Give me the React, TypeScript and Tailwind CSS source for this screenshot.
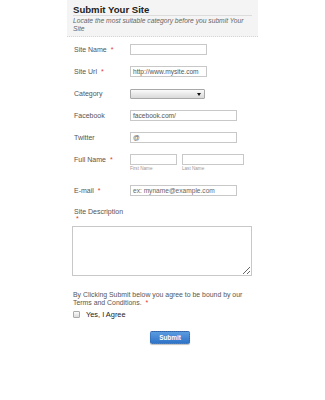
import React from "react";

const Star = () => <span className="text-[#e53935] ml-[4px]">*</span>;

function Row({ label, req, children, extra = "" }: { label: string; req?: boolean; children: React.ReactNode; extra?: string }) {
  return (
    <div className={`flex items-start h-[22px] ${extra}`}>
      <div className="w-[56px] h-[11px] leading-[11px] text-[7px] text-[#555] whitespace-nowrap">
        {label}
        {req && <Star />}
      </div>
      {children}
    </div>
  );
}

const inputCls =
  "h-[11px] border border-[#c8c8c8] bg-white text-[6.6px] leading-[9px] text-[#555] pl-[2px] box-border";

export default function App() {
  return (
    <div className="w-[325px] h-[400px] bg-white font-['Liberation_Sans',Arial,sans-serif]">
      <div className="w-[191px] mx-auto">
        {/* Header */}
        <div className="bg-[#f4f4f4] h-[37px] px-[6px] pt-[4px] border-b border-dotted border-[#d6d6d6]">
          <div className="text-[9.6px] font-bold text-[#222] leading-[11px] border-b border-[#dcdcdc]">
            Submit Your Site
          </div>
          <div className="text-[6.7px] italic text-[#666] leading-[7.5px] mt-[1px]">
            Locate the most suitable category before you submit Your Site
          </div>
        </div>

        {/* Body */}
        <div className="pl-[7px] pt-[7px]">
          <Row label="Site Name" req>
            <div className={`${inputCls} w-[77px]`}></div>
          </Row>
          <Row label="Site Url" req>
            <div className={`${inputCls} w-[77px]`}>http://www.mysite.com</div>
          </Row>
          <Row label="Category">
            <div className="w-[75px] h-[10px] mt-[1px] border border-[#a8a8a8] rounded-[1px] bg-gradient-to-b from-[#fafafa] to-[#d9d9d9] flex items-center justify-end pr-[3px] box-border">
              <svg width="4" height="3" viewBox="0 0 4 3">
                <path d="M0 0H4L2 3Z" fill="#111" />
              </svg>
            </div>
          </Row>
          <Row label="Facebook">
            <div className={`${inputCls} w-[107px]`}>facebook.com/</div>
          </Row>
          <Row label="Twitter">
            <div className={`${inputCls} w-[107px]`}>@</div>
          </Row>
          <Row label="Full Name" req extra="h-[31px]">
            <div className="flex gap-[5px]">
              <div>
                <div className={`${inputCls} w-[47px]`}></div>
                <div className="text-[4.6px] text-[#999] leading-[6px] mt-[1px]">First Name</div>
              </div>
              <div>
                <div className={`${inputCls} w-[62px]`}></div>
                <div className="text-[4.6px] text-[#999] leading-[6px] mt-[1px]">Last Name</div>
              </div>
            </div>
          </Row>
          <Row label="E-mail" req>
            <div className={`${inputCls} w-[107px] text-[#666]`}>ex: myname@example.com</div>
          </Row>

          {/* Site Description */}
          <div className="mt-[1px] text-[7px] text-[#555] leading-[8px]">
            Site Description
            <div className="text-[#e53935] pl-[2px] leading-[6px]">*</div>
          </div>
          <textarea
            className="block mt-[4px] -ml-[2px] w-[180px] h-[50px] border border-[#c8c8c8] bg-white resize outline-none"
            readOnly
          />

          {/* Terms */}
          <div className="mt-[15px] -ml-[1px] text-[6.9px] text-[#555] leading-[8px]">
            By Clicking Submit below you agree to be bound by our
            <br />
            Terms and Conditions.
            <span className="text-[#e53935] ml-[4px]">*</span>
          </div>
          <div className="flex items-center mt-[3px] -ml-[1px]">
            <div className="w-[7px] h-[7px] border border-[#aaa] rounded-[1px] bg-gradient-to-b from-[#fafafa] to-[#dcdcdc]" />
            <span className="ml-[6px] text-[7.4px] text-[#222] leading-[9px]">Yes, I Agree</span>
          </div>

          {/* Submit */}
          <div className="mt-[12px] ml-[76px]">
            <div className="w-[40px] h-[13px] rounded-[2px] border border-dotted border-[#2f64a8] bg-gradient-to-b from-[#5a9be0] to-[#2f74c8] flex items-center justify-center text-white font-bold text-[6.4px] leading-[13px] shadow-[0_1px_1px_rgba(0,0,0,0.25)]">
              Submit
            </div>
          </div>
        </div>
      </div>
    </div>
  );
}
